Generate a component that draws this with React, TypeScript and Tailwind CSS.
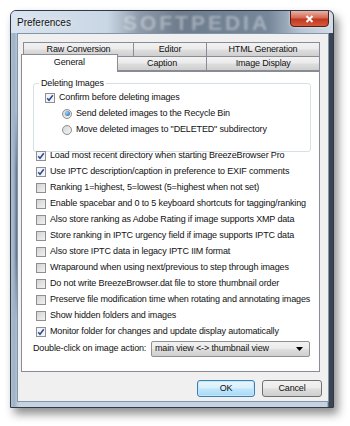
import React from 'react';

const FONT = "font-['Tahoma','Liberation_Sans',Arial,sans-serif]";

function CheckBox({ checked }: { checked?: boolean }) {
  return (
    <span
      className={`w-[10px] h-[10px] shrink-0 border border-[#8e8f8f] flex items-center justify-center ${
        checked
          ? 'bg-[#f4f4f4]'
          : 'bg-[linear-gradient(135deg,#d2d2d2,#e6e6e6_60%,#f2f2f2)]'
      }`}
    >
      {checked && (
        <svg width="8" height="8" viewBox="0 0 8 8">
          <path d="M1.2 4.2 L3 6.3 L6.8 1.2" stroke="#2a4aa0" strokeWidth="1.5" fill="none" />
        </svg>
      )}
    </span>
  );
}

function Radio({ checked }: { checked?: boolean }) {
  return (
    <span className="w-[10px] h-[10px] shrink-0 rounded-full border border-[#8e8f8f] bg-[linear-gradient(135deg,#d6d6d6,#f4f4f4)] flex items-center justify-center">
      {checked && (
        <span className="w-[5px] h-[5px] rounded-full bg-[radial-gradient(circle_at_35%_35%,#9fd2f5,#1d5fa8)]" />
      )}
    </span>
  );
}

function Row({ label, checked }: { label: string; checked?: boolean }) {
  return (
    <div className="h-[16px] flex items-center gap-[4px]">
      <CheckBox checked={checked} />
      <span className="whitespace-nowrap">{label}</span>
    </div>
  );
}

function Tab({ label, w }: { label: string; w: string }) {
  return (
    <div
      className={`${w} h-[15px] border border-[#898c95] -ml-px first:ml-0 bg-[linear-gradient(#f2f2f2,#ebebeb_45%,#dddddd_55%,#cfcfcf)] flex items-center justify-center`}
    >
      {label}
    </div>
  );
}

const OPTIONS: [string, boolean][] = [
  ['Load most recent directory when starting BreezeBrowser Pro', true],
  ['Use IPTC description/caption in preference to EXIF comments', true],
  ['Ranking 1=highest, 5=lowest (5=highest when not set)', false],
  ['Enable spacebar and 0 to 5 keyboard shortcuts for tagging/ranking', false],
  ['Also store ranking as Adobe Rating if image supports XMP data', false],
  ['Store ranking in IPTC urgency field if image supports IPTC data', false],
  ['Also store IPTC data in legacy IPTC IIM format', false],
  ['Wraparound when using next/previous to step through images', false],
  ['Do not write BreezeBrowser.dat file to store thumbnail order', false],
  ['Preserve file modification time when rotating and annotating images', false],
  ['Show hidden folders and images', false],
  ['Monitor folder for changes and update display automatically', true],
];

export default function App() {
  return (
    <div className={`w-[350px] h-[426px] bg-white pt-[10px] pl-[10px] text-[9px] tracking-[-0.15px] text-[#111] ${FONT}`}>
      {/* window */}
      <div className="w-[324px] h-[398px] rounded-t-[6px] border border-[#2d3a4a] flex flex-col shadow-[4px_6px_10px_rgba(0,0,0,0.45)] bg-[linear-gradient(90deg,#aebfd2_0px,#9fb1c6_3px,transparent_8px,transparent_316px,#3a4452_318px),linear-gradient(#cdd9e6_0%,#b8c8d9_25%,#34465e_40%,#2f3d52_62%,#b4c4d6_78%,#c6d3e1_100%)]">
        {/* title bar */}
        <div className="relative h-[22px] flex items-center pl-[6px] overflow-hidden rounded-t-[5px] bg-[linear-gradient(90deg,#d9e4ef_0%,#c9d6e4_30%,#8d9aa9_40%,#6e7c8d_52%,#76879a_80%,#b7c4d3_90%,#d3dde8_100%)]">
          <span className="relative z-10 text-[10px] tracking-normal [text-shadow:0_0_6px_#ffffff]">Preferences</span>
          <span className="ml-[52px] text-[21px] leading-none font-bold tracking-[3px] text-white/35 blur-[1.2px] font-['Liberation_Sans',sans-serif]">
            SOFTPEDIA
          </span>
          <div className="absolute right-[4px] top-[-1px] w-[39px] h-[17px] rounded-b-[4px] border border-[#5a1d14] bg-[linear-gradient(#eab2a4,#d46a55_45%,#c2381f_55%,#d35a3e)] flex items-center justify-center shadow-[0_0_3px_rgba(255,255,255,0.6)]">
            <svg width="9" height="8" viewBox="0 0 9 8">
              <path d="M1.5 1 L7.5 7 M7.5 1 L1.5 7" stroke="#ffffff" strokeWidth="2" />
            </svg>
          </div>
        </div>

        {/* client area */}
        <div className="flex-1 ml-[6px] mr-[4px] mb-[5px] border border-[#8294a8] bg-[#f0f0f0] pl-[3px] pt-[8px] pr-[8px] flex flex-col">
          {/* tabs */}
          <div className="pl-[2px] flex">
            <Tab label="Raw Conversion" w="w-[111px]" />
            <Tab label="Editor" w="w-[74px]" />
            <Tab label="HTML Generation" w="w-[114px]" />
          </div>
          <div className="flex -mt-px items-end">
            <div className="relative z-10 w-[97px] h-[18px] -mt-[2px] border border-b-0 border-[#898c95] bg-white flex items-start justify-center pt-[1px] -mb-px">
              General
            </div>
            <div className="w-[91px] h-[15px] -ml-px border border-[#898c95] bg-[linear-gradient(#f2f2f2,#ebebeb_45%,#dddddd_55%,#cfcfcf)] flex items-center justify-center">
              Caption
            </div>
            <div className="w-[114px] h-[15px] -ml-px border border-[#898c95] bg-[linear-gradient(#f2f2f2,#ebebeb_45%,#dddddd_55%,#cfcfcf)] flex items-center justify-center">
              Image Display
            </div>
          </div>

          {/* panel */}
          <div className="w-[299px] h-[301px] border border-[#898c95] bg-white pl-[11px] pt-[5px] pr-[9px]">
            {/* group box */}
            <fieldset className="border border-[#d5dfe5] rounded-[3px] pl-[11px] pb-[13px] pt-0 mr-0 w-[278px]">
              <legend className="px-[2px] -ml-[6px]">Deleting Images</legend>
              <div className="h-[16px] -mt-[1px] flex items-center gap-[4px]">
                <CheckBox checked />
                <span>Confirm before deleting images</span>
              </div>
              <div className="pl-[17px]">
                <div className="h-[16px] flex items-center gap-[4px]">
                  <Radio checked />
                  <span>Send deleted images to the Recycle Bin</span>
                </div>
                <div className="h-[16px] flex items-center gap-[4px]">
                  <Radio />
                  <span>Move deleted images to "DELETED" subdirectory</span>
                </div>
              </div>
            </fieldset>

            <div className="-mt-[4px] pl-[3px]">
              {OPTIONS.map(([label, checked]) => (
                <Row key={label} label={label} checked={checked} />
              ))}
            </div>

            <div className="mt-[1px] flex items-center">
              <span className="whitespace-nowrap shrink-0">Double-click on image action:</span>
              <div className="w-[159px] h-[16px] shrink-0 ml-auto border border-[#8e8f8f] rounded-[2px] bg-[linear-gradient(#f2f2f2,#ebebeb_45%,#dddddd_55%,#cfcfcf)] flex items-center pl-[3px] pr-[6px]">
                <span className="flex-1 whitespace-nowrap">main view &lt;-&gt; thumbnail view</span>
                <svg width="7" height="4" viewBox="0 0 7 4">
                  <path d="M0 0 H7 L3.5 4 Z" fill="#000" />
                </svg>
              </div>
            </div>
          </div>

          {/* buttons */}
          <div className="mt-[8px] flex justify-end gap-[7px] -mr-[2px]">
            <button className="w-[58px] h-[17px] rounded-[3px] border border-[#3c7fb1] bg-[linear-gradient(#eaf6fd,#d9f0fc_45%,#bee6fd_55%,#a7d9f5)] shadow-[inset_0_0_0_1px_#c5e6fa]">
              OK
            </button>
            <button className="w-[60px] h-[17px] rounded-[3px] border border-[#707070] bg-[linear-gradient(#f2f2f2,#ebebeb_45%,#dddddd_55%,#cfcfcf)]">
              Cancel
            </button>
          </div>
        </div>
      </div>
    </div>
  );
}
